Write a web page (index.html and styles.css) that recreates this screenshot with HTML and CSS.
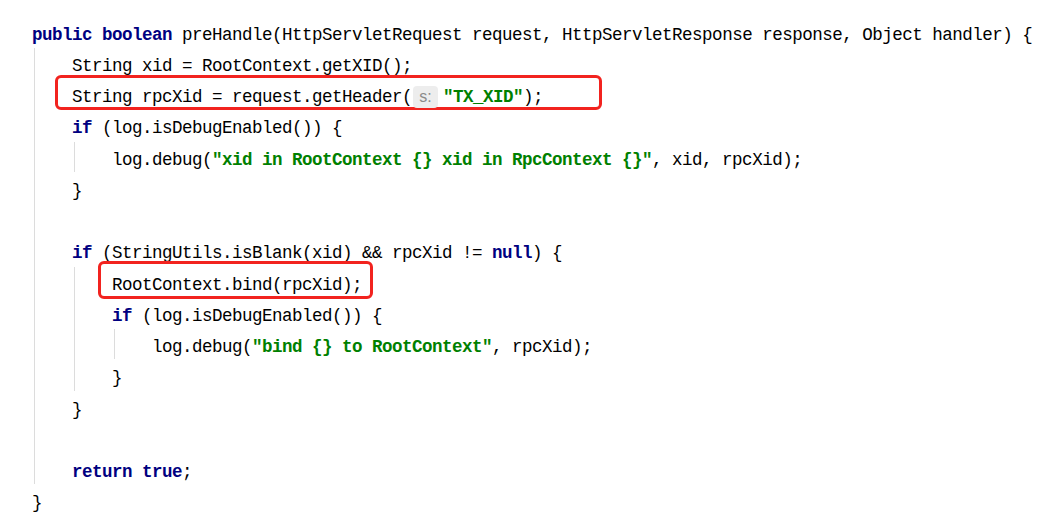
FILE: index.html
```html
<!DOCTYPE html>
<html lang="en">
<head>
    <meta charset="UTF-8">
    <title>preHandle</title>
    <link rel="stylesheet" href="styles.css">
</head>
<body>
    <div class="code">
        <div class="line"><span class="kw">public boolean</span> preHandle(HttpServletRequest request, HttpServletResponse response, Object handler) {</div>
        <div class="block">
            <div class="line">String xid = RootContext.getXID();</div>
            <div class="line"><span class="mark mark-header">String rpcXid = request.getHeader(<span class="hint">s:</span><span class="str">"TX_XID"</span>);</span></div>
            <div class="line"><span class="kw">if</span> (log.isDebugEnabled()) {</div>
            <div class="block">
                <div class="line">log.debug(<span class="str">"xid in RootContext {} xid in RpcContext {}"</span>, xid, rpcXid);</div>
            </div>
            <div class="line">}</div>
            <div class="line"></div>
            <div class="line"><span class="kw">if</span> (StringUtils.isBlank(xid) &amp;&amp; rpcXid != <span class="kw">null</span>) {</div>
            <div class="block">
                <div class="line"><span class="mark mark-bind">RootContext.bind(rpcXid);</span></div>
                <div class="line"><span class="kw">if</span> (log.isDebugEnabled()) {</div>
                <div class="block">
                    <div class="line">log.debug(<span class="str">"bind {} to RootContext"</span>, rpcXid);</div>
                </div>
                <div class="line">}</div>
            </div>
            <div class="line">}</div>
            <div class="line"></div>
            <div class="line"><span class="kw">return true</span>;</div>
        </div>
        <div class="line">}</div>
    </div>
</body>
</html>
```

FILE: styles.css
```css
/* 代码截图 */
body {
    margin: 0;
    background-color: #fff;
}

.code {
    padding: 19.5px 0 0 32px;
    font-family: "Liberation Mono", monospace;
    font-size: 17.5px;
    letter-spacing: -0.5px;
    color: #000;
}

.line {
    height: 31.27px;
    line-height: 31.27px;
    white-space: pre;
}

/* 缩进块和参考线 */
.block {
    position: relative;
    padding-left: 40px;
}

.block::before {
    content: "";
    position: absolute;
    left: 2px;
    top: -3px;
    bottom: 4px;
    width: 1px;
    background-color: #dcdcdc;
}

.kw {
    color: #000080;
    font-weight: bold;
}

.str {
    color: #008000;
    font-weight: bold;
}

/* 参数提示 */
.hint {
    display: inline-block;
    width: 25px;
    height: 22px;
    line-height: 22px;
    margin: 0 5px 0 1px;
    vertical-align: 0;
    text-align: center;
    font-family: "Liberation Sans", sans-serif;
    font-size: 16px;
    letter-spacing: 0;
    color: #8a8a8a;
    background-color: #ededed;
    border-radius: 4px;
}

/* 红框标注 */
.mark {
    border: 3px solid #f2231f;
    border-radius: 6px;
}

.mark-header {
    padding: 9px 56px 0 14px;
    margin-left: -17px;
}

.mark-bind {
    padding: 11px 8px 1px 11px;
    margin-left: -14px;
}
```
